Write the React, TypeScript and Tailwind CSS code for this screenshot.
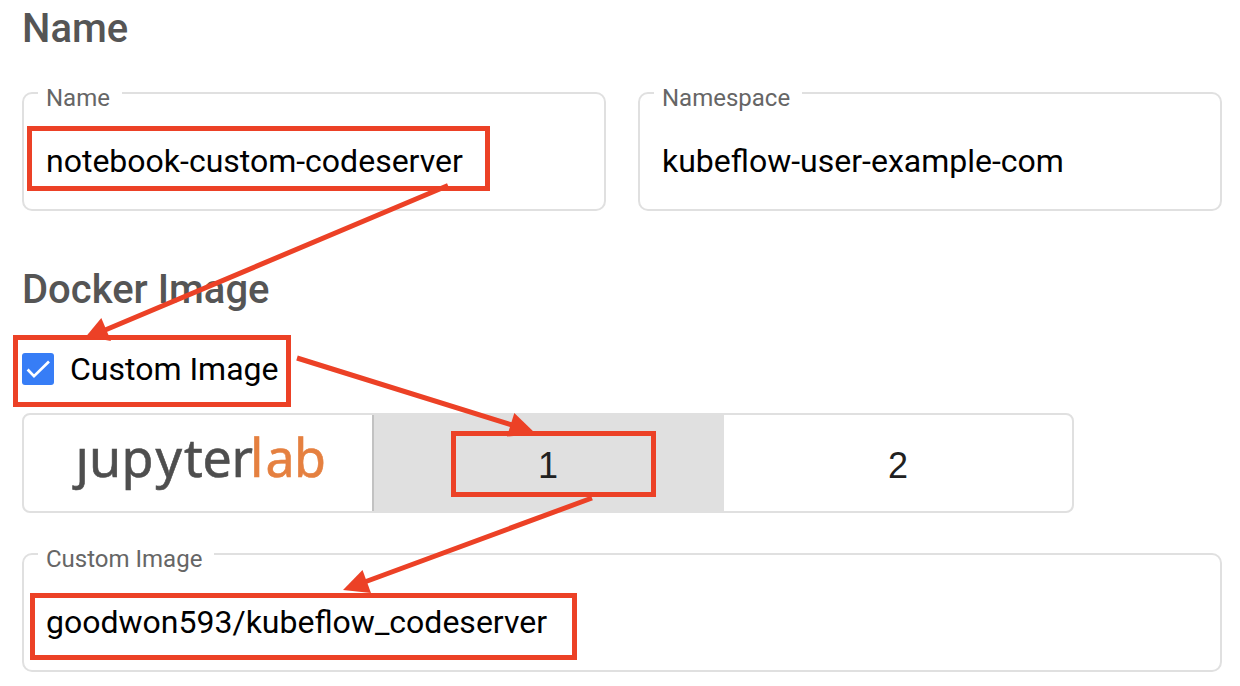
import React from "react";

function Heading({ children }: { children: React.ReactNode }) {
  return (
    <h2 className="h-12 text-[40px] leading-[48px] font-medium text-[#555555]">{children}</h2>
  );
}

function OutlinedField({ label, value }: { label: string; value: string }) {
  return (
    <fieldset className="h-[119px] min-w-0 flex-1 rounded-[10px] border-2 border-[#e0e0e0] pl-[22px]">
      <legend className="-ml-2 h-[2px] pr-3 pl-2 text-2xl leading-[12px] whitespace-nowrap text-[#666666]">
        {label}
      </legend>
      <div className="pt-[47px] text-[32px] leading-10 text-black">{value}</div>
    </fieldset>
  );
}

function JupyterLabLogo() {
  return (
    <svg
      width="260"
      height="64"
      viewBox="0 0 260 64"
      strokeWidth="0.6"
      className="overflow-visible font-['Noto_Sans',sans-serif] text-[52px]"
    >
      <text x="7.500 21 53.500 87.500 116 134.500 163.500" y="46" fill="#4e4e4e" stroke="#4e4e4e">
        ȷupyter
      </text>
      <text x="182 197.500 226" y="46" fill="#e58040" stroke="#e58040">
        lab
      </text>
    </svg>
  );
}

function Annotations() {
  return (
    <svg
      className="pointer-events-none absolute top-0 left-0"
      width="1240"
      height="686"
      viewBox="0 0 1240 686"
      fill="none"
      stroke="#ec4126"
      strokeWidth="5"
    >
      <rect x="29.5" y="128.5" width="458" height="60" />
      <rect x="15.5" y="337.5" width="273" height="67" />
      <rect x="453.5" y="433.5" width="200" height="61" />
      <rect x="32.5" y="595.5" width="542" height="62" />
      <path d="M448 185.500 104 330.500M297 358 512 425M592 498 366 581.500" />
      <g fill="#ec4126" stroke="none">
        <path d="M86 336.500 101.300 318 111 341Z" />
        <path d="M536 434 514.300 413 507 436.500Z" />
        <path d="M343 590 362.500 570 371 593Z" />
      </g>
    </svg>
  );
}

export default function App() {
  return (
    <main className="relative h-[686px] w-[1240px] overflow-hidden bg-white pt-[5px] pr-[18px] pl-[22px] font-[Roboto,sans-serif]">
      <Heading>Name</Heading>
      <div className="mt-[39px] flex gap-8">
        <OutlinedField label="Name" value="notebook-custom-codeserver" />
        <OutlinedField label="Namespace" value="kubeflow-user-example-com" />
      </div>

      <div className="mt-[55px]">
        <Heading>Docker Image</Heading>
      </div>
      <div className="mt-[39px] flex h-8 items-center gap-4">
        <span className="size-8 rounded-[3px] bg-[#377df6]">
          <svg width="32" height="32" viewBox="0 0 32 32" fill="none" stroke="white" strokeWidth="2.700">
            <path d="M5.600 16.500 12 23.200 27 8.500" />
          </svg>
        </span>
        <span className="text-[32px] leading-8 text-black">Custom Image</span>
      </div>

      <div className="mt-7 flex h-[100px] w-[1052px] overflow-hidden rounded-lg border-2 border-[#e0e0e0] font-['Liberation_Sans',sans-serif] text-4xl leading-[96px] text-[#212121]">
        <div className="w-[348px] pt-[16px] pl-[44px]">
          <JupyterLabLogo />
        </div>
        <div className="w-[350px] border-l-2 border-[#c2c2c2] bg-[#e0e0e0] pt-[3px] text-center">1</div>
        <div className="w-[350px] border-l-2 border-[#e0e0e0] pt-[3px] text-center">2</div>
      </div>

      <div className="mt-10 flex">
        <OutlinedField label="Custom Image" value="goodwon593/kubeflow_codeserver" />
      </div>
      <Annotations />
    </main>
  );
}
